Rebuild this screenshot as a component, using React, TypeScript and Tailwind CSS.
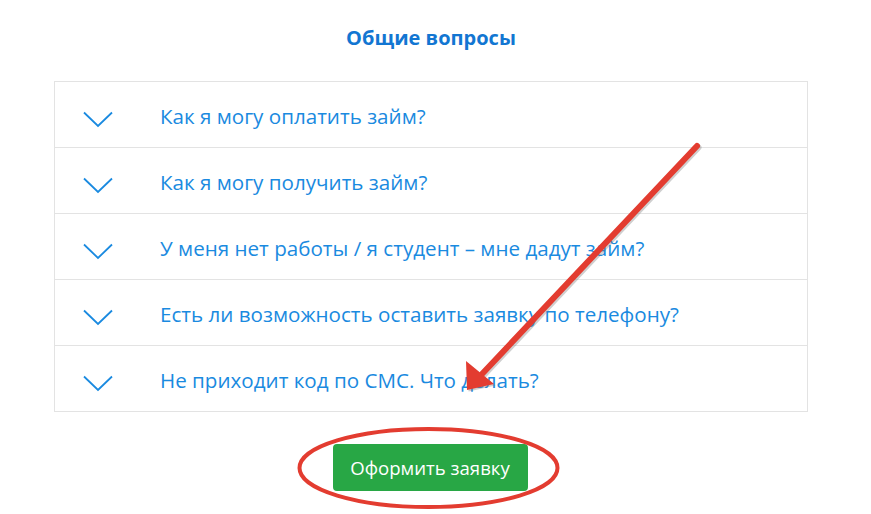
const questions = [
  "Как я могу оплатить займ?",
  "Как я могу получить займ?",
  "У меня нет работы / я студент – мне дадут займ?",
  "Есть ли возможность оставить заявку по телефону?",
  "Не приходит код по СМС. Что делать?",
];

function Chevron() {
  return (
    <svg width="30" height="17" viewBox="0 0 30 17" className="mt-[9px] shrink-0">
      <path d="M1 1.5 L15 15 L29 1.5" fill="none" stroke="#1a8ae0" strokeWidth="1.8" />
    </svg>
  );
}

export default function App() {
  return (
    <div
      className="relative h-[514px] w-[871px] overflow-hidden bg-white"
      style={{ fontFamily: '"Open Sans", "Noto Sans", sans-serif' }}
    >
      <div className="ml-[54px] w-[754px] pt-[23px]">
        <h2 className="text-center text-[20px] font-bold leading-[29px] text-[#1276d2]">
          Общие вопросы
        </h2>

        <div className="mt-[29px] border border-[#e3e3e3]">
          {questions.map((q, i) => (
            <div
              key={q}
              className={
                "flex h-[65px] items-center pl-[28px] " +
                (i < questions.length - 1 ? "border-b border-[#e3e3e3] box-content" : "")
              }
            >
              <Chevron />
              <span className="ml-[47px] mt-[3px] text-[20.6px] text-[#1a8ae0]">{q}</span>
            </div>
          ))}
        </div>

        <div className="mt-[32px] flex justify-center">
          <button className="h-[47px] w-[195px] -translate-x-[1px] rounded-[4px] bg-[#28a745] text-[18.6px] text-white">
            Оформить заявку
          </button>
        </div>
      </div>

      <svg
        className="pointer-events-none absolute left-0 top-0"
        width="871"
        height="514"
        viewBox="0 0 871 514"
      >
        <g transform="translate(1.5 1.5)" opacity="0.35">
          <line x1="697" y1="146" x2="482" y2="374" stroke="#777" strokeWidth="6" strokeLinecap="round" />
          <polygon points="466,361 494,384 467,390" fill="#777" />
        </g>
        <line x1="697" y1="146" x2="482" y2="374" stroke="#e33c30" strokeWidth="6" strokeLinecap="round" />
        <polygon points="466,361 494,384 467,390" fill="#e33c30" />
        <ellipse cx="428.5" cy="468" rx="129" ry="39" fill="none" stroke="#e33c30" strokeWidth="4" />
      </svg>
    </div>
  );
}
